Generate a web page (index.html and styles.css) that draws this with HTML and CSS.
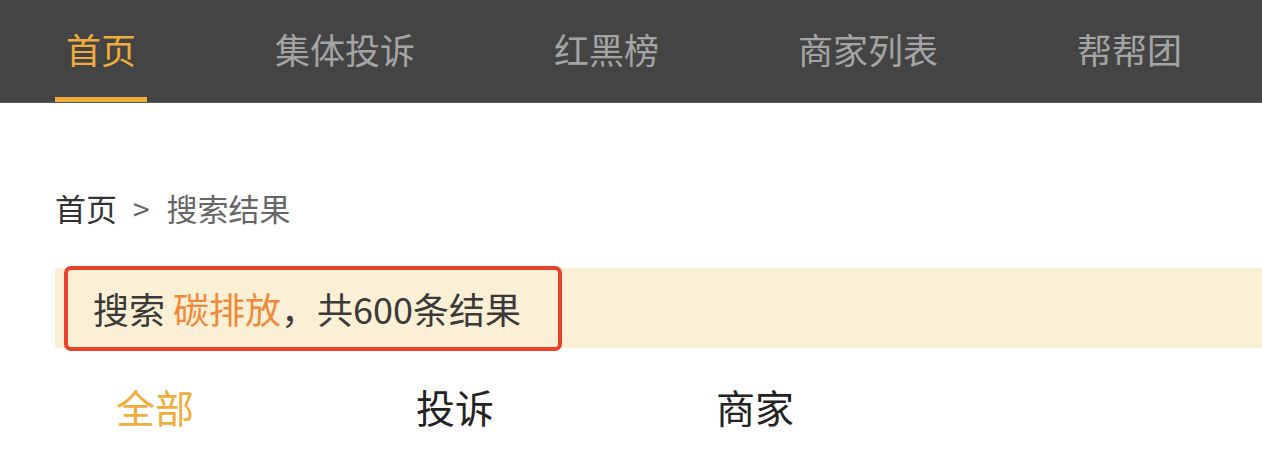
FILE: index.html
```html
<!DOCTYPE html>
<html lang="zh-CN">
<head>
    <meta charset="UTF-8">
    <meta name="viewport" content="width=device-width, initial-scale=1.0">
    <title>搜索结果</title>
    <link rel="stylesheet" href="styles.css">
</head>
<body>
    <!-- 顶部导航 -->
    <nav class="top-nav">
        <a class="nav-item active" href="#">首页</a>
        <a class="nav-item" href="#">集体投诉</a>
        <a class="nav-item" href="#">红黑榜</a>
        <a class="nav-item" href="#">商家列表</a>
        <a class="nav-item" href="#">帮帮团</a>
    </nav>

    <div class="main">
        <div class="breadcrumb">
            <a href="#">首页</a>
            <span class="sep">&gt;</span>
            <span class="current">搜索结果</span>
        </div>

        <div class="result-bar">
            <span class="result-text">搜索 <em class="keyword">碳排放</em>，共600条结果</span>
        </div>

        <div class="tabs">
            <span class="tab active">全部</span>
            <span class="tab">投诉</span>
            <span class="tab">商家</span>
        </div>
    </div>
</body>
</html>
```

FILE: styles.css
```css
:root {
    --nav-bg: #444444;
    --accent: #f0ad3c;
    --keyword: #f08a3a;
    --highlight: #e8412b;
    --banner-bg: #fbefd6;
}

body {
    margin: 0;
    font-family: "Noto Sans CJK SC", "Noto Sans", sans-serif;
    color: #333;
    background-color: #fff;
    overflow: hidden;
}

a {
    text-decoration: none;
    color: inherit;
}

.top-nav {
    display: flex;
    height: 103px;
    padding-left: 55px;
    background-color: var(--nav-bg);
    border-bottom: 1px solid #5a5a5a;
    box-sizing: border-box;
}

.nav-item {
    display: flex;
    align-items: center;
    flex-shrink: 0;
    white-space: nowrap;
    padding: 0 11px;
    margin-right: 117px;
    font-size: 35px;
    color: #a4a4a4;
    border-bottom: 5px solid transparent;
}

.nav-item:last-child {
    margin-right: 0;
}

.nav-item.active {
    color: var(--accent);
    border-bottom-color: var(--accent);
}

.main {
    padding-left: 55px;
}

.breadcrumb {
    margin-top: 85px;
    line-height: 40px;
    font-size: 31px;
    color: #666;
}

.breadcrumb a {
    color: #333;
}

.breadcrumb .sep {
    margin: 0 10px 0 9px;
    font-size: 30px;
}

.result-bar {
    margin-top: 40px;
    height: 80px;
    background-color: var(--banner-bg);
}

.result-text {
    display: inline-block;
    box-sizing: border-box;
    height: 85px;
    margin: -2px 0 0 9px;
    padding: 0 37px 0 25px;
    line-height: 77px;
    font-size: 36px;
    white-space: nowrap;
    color: #3a3a3a;
    border: 4px solid var(--highlight);
    border-radius: 7px;
}

.keyword {
    font-style: normal;
    color: var(--keyword);
}

.tabs {
    display: flex;
    margin-top: 33px;
    padding-left: 61px;
}

.tab {
    width: 300px;
    line-height: 50px;
    font-size: 39px;
    color: #222;
}

.tab.active {
    color: var(--accent);
}
```
